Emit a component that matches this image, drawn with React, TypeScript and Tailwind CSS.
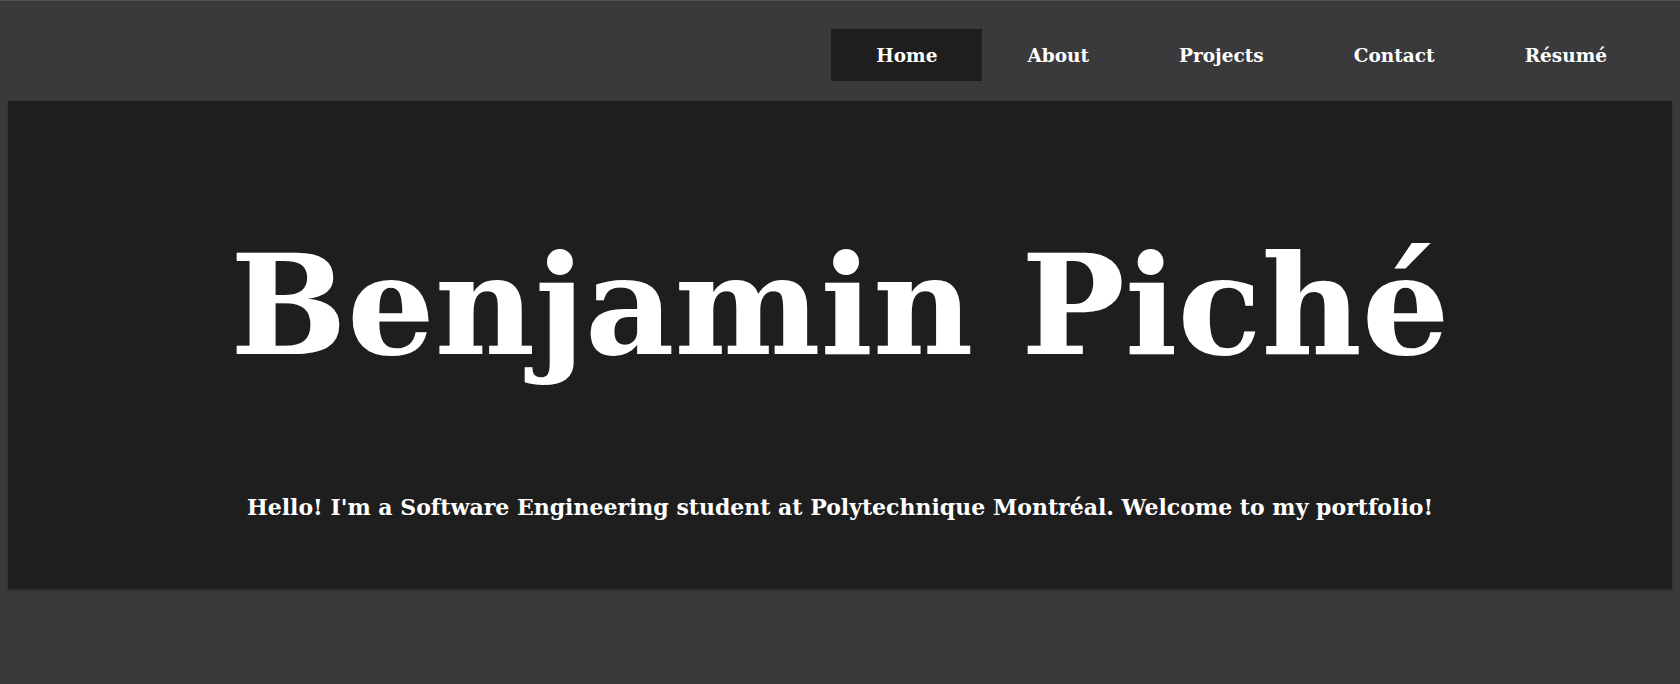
import React from "react";

const links = ["Home", "About", "Projects", "Contact", "Résumé"];

const Navbar: React.FC = () => {
  return (
    <nav className="flex justify-end pt-[28px] pb-[20px] pr-[28px]">
      <ul className="flex list-none">
        {links.map((link, i) => (
          <li
            key={link}
            className={`h-[52px] px-[45px] pt-[2px] flex items-center text-[18.5px] font-bold text-white cursor-pointer ${
              i === 0 ? "bg-[#1e1e1e]" : ""
            }`}
          >
            {link}
          </li>
        ))}
      </ul>
    </nav>
  );
};

const Hero: React.FC = () => {
  return (
    <section className="mx-2 h-[488px] bg-[#1e1e1e] shadow-[0_1px_2px_rgba(0,0,0,0.35)] flex flex-col items-center text-white">
      <h1 className="mt-[136px] text-[138px] leading-none font-bold">Benjamin Piché</h1>
      <p className="mt-[116px] text-[22px] font-bold">
        Hello! I'm a Software Engineering student at Polytechnique Montréal. Welcome to my portfolio!
      </p>
    </section>
  );
};

export default function App() {
  return (
    <div
      className="min-h-screen bg-[#3a3a3c] border-t border-[#505052]"
      style={{ fontFamily: '"DejaVu Serif", Georgia, serif' }}
    >
      <Navbar />
      <Hero />
    </div>
  );
}
